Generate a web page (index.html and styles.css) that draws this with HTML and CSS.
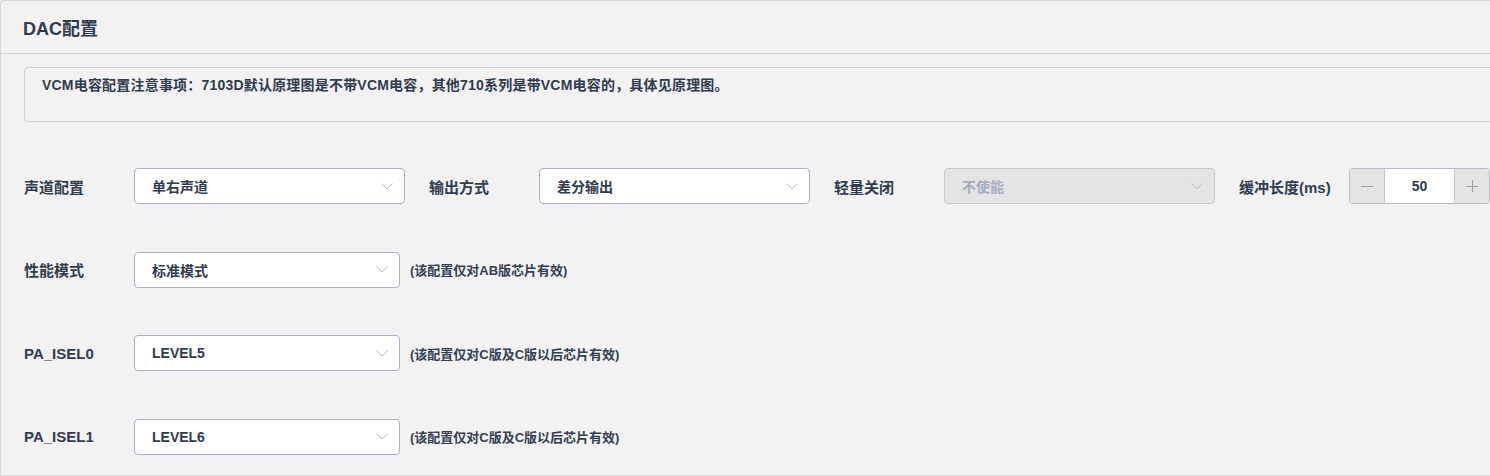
FILE: index.html
```html
<!DOCTYPE html>
<html lang="zh-CN">
<head>
<meta charset="utf-8">
<title>DAC配置</title>
<link rel="stylesheet" href="styles.css">
</head>
<body>
<div class="card">
  <div class="card-header">DAC配置</div>
  <div class="card-body">
    <div class="notice">VCM电容配置注意事项：7103D默认原理图是不带VCM电容，其他710系列是带VCM电容的，具体见原理图。</div>
    <div class="form">
      <div class="row">
        <div class="group">
          <span class="label">声道配置</span>
          <div class="select"><span>单右声道</span><svg class="chev" width="12" height="7" viewBox="0 0 12 7"><path d="M0.5 0.5 L6 6 L11.5 0.5"/></svg></div>
        </div>
        <div class="group">
          <span class="label">输出方式</span>
          <div class="select"><span>差分输出</span><svg class="chev" width="12" height="7" viewBox="0 0 12 7"><path d="M0.5 0.5 L6 6 L11.5 0.5"/></svg></div>
        </div>
        <div class="group">
          <span class="label">轻量关闭</span>
          <div class="select disabled"><span>不使能</span><svg class="chev" width="12" height="7" viewBox="0 0 12 7"><path d="M0.5 0.5 L6 6 L11.5 0.5"/></svg></div>
        </div>
        <div class="group">
          <span class="label">缓冲长度(ms)</span>
          <div class="number">
            <span class="num-btn minus"><svg width="12" height="12" viewBox="0 0 12 12"><path d="M0 6.5 H12"/></svg></span>
            <span class="num-val">50</span>
            <span class="num-btn plus"><svg width="12" height="12" viewBox="0 0 12 12"><path d="M0 6.5 H12 M6.5 0 V12"/></svg></span>
          </div>
        </div>
      </div>
      <div class="row">
        <span class="label">性能模式</span>
        <div class="select narrow"><span>标准模式</span><svg class="chev" width="12" height="7" viewBox="0 0 12 7"><path d="M0.5 0.5 L6 6 L11.5 0.5"/></svg></div>
        <span class="hint">(该配置仅对AB版芯片有效)</span>
      </div>
      <div class="row">
        <span class="label">PA_ISEL0</span>
        <div class="select narrow"><span>LEVEL5</span><svg class="chev" width="12" height="7" viewBox="0 0 12 7"><path d="M0.5 0.5 L6 6 L11.5 0.5"/></svg></div>
        <span class="hint">(该配置仅对C版及C版以后芯片有效)</span>
      </div>
      <div class="row">
        <span class="label">PA_ISEL1</span>
        <div class="select narrow"><span>LEVEL6</span><svg class="chev" width="12" height="7" viewBox="0 0 12 7"><path d="M0.5 0.5 L6 6 L11.5 0.5"/></svg></div>
        <span class="hint">(该配置仅对C版及C版以后芯片有效)</span>
      </div>
    </div>
  </div>
</div>
</body>
</html>
```
FILE: styles.css
```css
html, body {
  margin: 0;
  padding: 0;
  background: #f2f2f2;
  overflow: hidden;
}
body {
  font-family: "Liberation Sans", "Noto Sans CJK SC", sans-serif;
  font-weight: 700;
  color: #303c4f;
}
.card {
  width: 1530px;
  height: 476px;
  box-sizing: border-box;
  border: 1px solid #d6d6d6;
  border-radius: 4px 0 0 0;
  background: #f2f2f2;
}
.card-header {
  height: 52px;
  border-bottom: 1px solid #d3d3d3;
  display: flex;
  align-items: center;
  padding-left: 22px;
  font-size: 18px;
  color: #2c3b50;
}
.card-body {
  padding: 13px 0 0 23px;
}
.notice {
  box-sizing: border-box;
  height: 55px;
  border: 1px solid #d0d0d0;
  border-radius: 4px;
  padding: 7px 17px 0;
  font-size: 14px;
  line-height: 20px;
  letter-spacing: 0.2px;
  color: #2f3b4e;
}
.form {
  margin-top: 46px;
  display: flex;
  flex-direction: column;
  gap: 47.67px;
}
.row {
  display: flex;
  align-items: center;
  height: 36px;
}
.group {
  display: flex;
  align-items: center;
  margin-right: 24px;
}
.label {
  width: 110px;
  flex: none;
  font-size: 15px;
  color: #303c4f;
}
.select {
  box-sizing: border-box;
  width: 271px;
  height: 36px;
  border: 1px solid #a8afc6;
  border-radius: 4px;
  background: #ffffff;
  display: flex;
  align-items: center;
  justify-content: space-between;
  padding: 0 11px 0 17px;
  font-size: 14px;
  color: #2f3b4e;
}
.select.narrow {
  width: 266px;
}
.select.disabled {
  background: #e4e4e4;
  border-color: #c8c8c8;
  color: #a7acbd;
}
.chev path {
  fill: none;
  stroke: #b3bacb;
  stroke-width: 1;
}
.number {
  box-sizing: border-box;
  width: 141px;
  height: 36px;
  border: 1px solid #b6bcc9;
  border-radius: 4px;
  overflow: hidden;
  display: flex;
}
.num-btn {
  width: 34px;
  background: #e4e4e4;
  display: flex;
  align-items: center;
  justify-content: center;
}
.num-btn.minus {
  border-right: 1px solid #c3c7cf;
}
.num-btn.plus {
  border-left: 1px solid #c3c7cf;
}
.num-btn path {
  fill: none;
  stroke: #9aa0ab;
  stroke-width: 1;
}
.num-val {
  flex: 1;
  background: #ffffff;
  display: flex;
  align-items: center;
  justify-content: center;
  font-size: 14px;
  color: #2f3b4e;
}
.hint {
  margin-left: 10px;
  font-size: 13px;
  color: #333f52;
}
```
